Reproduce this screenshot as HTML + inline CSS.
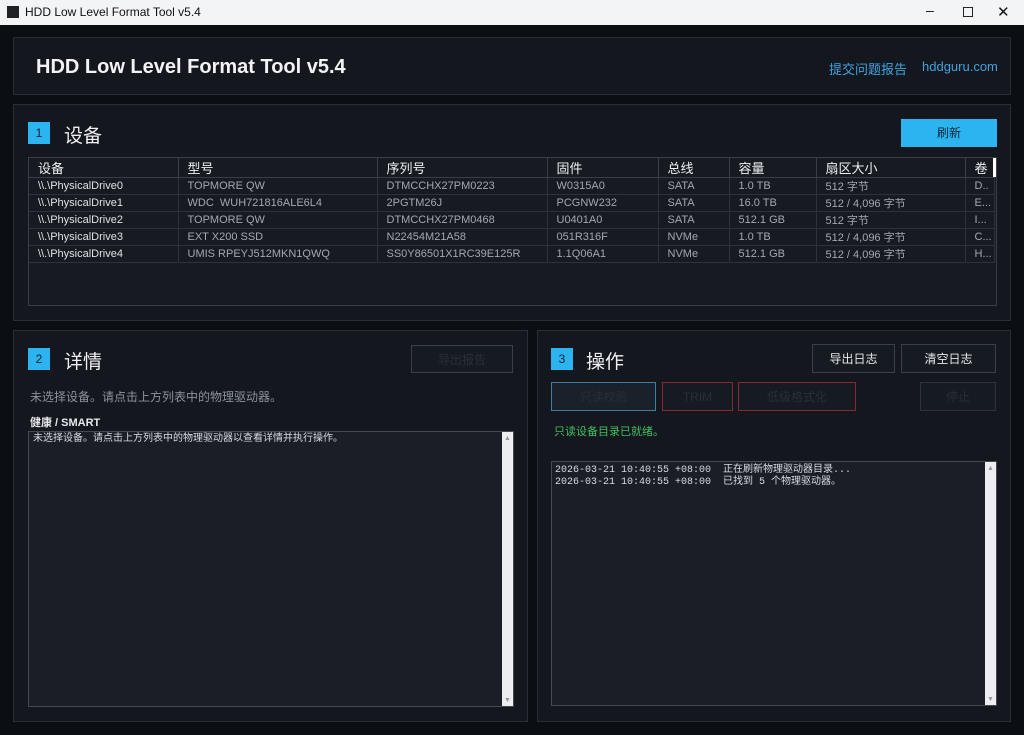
<!DOCTYPE html><html><head><meta charset="utf-8"><style>
*{box-sizing:border-box;margin:0;padding:0}
body{width:1024px;height:735px;overflow:hidden;background:#0b0e13;font-family:"Liberation Sans","Noto Sans CJK SC",sans-serif;color:#e8eaee;position:relative}
.a{position:absolute}
.tb{left:0;top:0;width:1024px;height:25px;background:#f3f4f6;color:#111;font-size:12px}
.pn{background:#14171e;border:1px solid #2a2e36}
.badge{width:22px;height:22px;background:#2bb4ef;color:#0d2030;font-size:12px;text-align:center;line-height:22px}
.h2{font-size:19px;color:#eef0f3}
.btn{border:1px solid #3a3f48;background:#161a21;font-size:12px;text-align:center;color:#e6e8ec}
.dis{color:#2a2f38}
table{border-collapse:collapse;font-size:11px;width:100%}
td{height:17px;border-bottom:1px solid #2e323a;border-right:1px solid #2e323a;padding-left:9px;color:#a3a8b0;white-space:nowrap}
th{height:19px;font-weight:normal;text-align:left;padding-left:9px;font-size:13px;color:#eef0f3;border-right:1px solid #3a3e46;border-bottom:1px solid #3a3e46}
td:first-child{color:#dfe2e6}
.ta{background:#1b1e27;border:1px solid #454a52}
.sb{background:#eceef1;width:11px}
.mono{font-family:"Liberation Mono","Noto Sans CJK SC",monospace;font-size:10px;color:#d8dbe0;line-height:12px}
</style></head><body>
<div class="a tb"><div class="a" style="left:7px;top:6px;width:12px;height:12px;background:#222"></div><div class="a" style="left:25px;top:5px">HDD Low Level Format Tool v5.4</div>
<div class="a" style="left:926px;top:2px;font-size:14px">–</div><div class="a" style="left:963px;top:7px;width:10px;height:10px;border:1px solid #222"></div><div class="a" style="left:997px;top:3px;font-size:15px">✕</div></div>
<div class="a pn" style="left:13px;top:37px;width:998px;height:58px"></div>
<div class="a" style="left:36px;top:56px;font-size:20px;font-weight:bold;color:#f2f3f5">HDD Low Level Format Tool v5.4</div>
<div class="a" style="left:829px;top:59px;font-size:13px;color:#3fa3e0">提交问题报告</div>
<div class="a" style="left:922px;top:59px;font-size:13px;color:#3fa3e0">hddguru.com</div>

<div class="a pn" style="left:13px;top:104px;width:998px;height:217px"></div>
<div class="a badge" style="left:28px;top:122px">1</div><div class="a h2" style="left:64px;top:121px">设备</div>
<div class="a" style="left:901px;top:119px;width:96px;height:28px;background:#2bb4ef;color:#0f2535;font-size:12px;text-align:center;line-height:28px">刷新</div>
<div class="a" style="left:28px;top:157px;width:969px;height:149px;border:1px solid #3a3e46;background:#171a21">
<table style="width:966px"><tr><th style="width:149px">设备</th><th style="width:199px">型号</th><th style="width:170px">序列号</th><th style="width:111px">固件</th><th style="width:71px">总线</th><th style="width:87px">容量</th><th style="width:149px">扇区大小</th><th>卷</th></tr>
<tr><td>\\.\PhysicalDrive0</td><td>TOPMORE QW</td><td>DTMCCHX27PM0223</td><td>W0315A0</td><td>SATA</td><td>1.0 TB</td><td>512 字节</td><td>D..</td></tr>
<tr><td>\\.\PhysicalDrive1</td><td>WDC &nbsp;WUH721816ALE6L4</td><td>2PGTM26J</td><td>PCGNW232</td><td>SATA</td><td>16.0 TB</td><td>512 / 4,096 字节</td><td>E...</td></tr>
<tr><td>\\.\PhysicalDrive2</td><td>TOPMORE QW</td><td>DTMCCHX27PM0468</td><td>U0401A0</td><td>SATA</td><td>512.1 GB</td><td>512 字节</td><td>I...</td></tr>
<tr><td>\\.\PhysicalDrive3</td><td>EXT X200 SSD</td><td>N22454M21A58</td><td>051R316F</td><td>NVMe</td><td>1.0 TB</td><td>512 / 4,096 字节</td><td>C...</td></tr>
<tr><td>\\.\PhysicalDrive4</td><td>UMIS RPEYJ512MKN1QWQ</td><td>SS0Y86501X1RC39E125R</td><td>1.1Q06A1</td><td>NVMe</td><td>512.1 GB</td><td>512 / 4,096 字节</td><td>H...</td></tr></table>
<div class="a" style="left:964px;top:0;width:3px;height:19px;background:#fff"></div></div>

<div class="a pn" style="left:13px;top:330px;width:515px;height:392px"></div>
<div class="a badge" style="left:28px;top:348px">2</div><div class="a h2" style="left:64px;top:347px">详情</div>
<div class="a btn dis" style="left:411px;top:345px;width:102px;height:28px;line-height:28px">导出报告</div>
<div class="a" style="left:30px;top:388px;font-size:12px;color:#8d939c">未选择设备。请点击上方列表中的物理驱动器。</div>
<div class="a" style="left:30px;top:414px;font-size:11px;color:#e8eaee;font-weight:bold">健康 / SMART</div>
<div class="a ta" style="left:28px;top:431px;width:486px;height:276px"><div class="a mono" style="left:4px;top:2px">未选择设备。请点击上方列表中的物理驱动器以查看详情并执行操作。</div>
<div class="a sb" style="right:0;top:0;height:274px"><div class="a" style="left:2px;top:3px;font-size:7px;color:#999">▲</div><div class="a" style="left:2px;bottom:2px;font-size:7px;color:#999">▼</div></div></div>

<div class="a pn" style="left:537px;top:330px;width:474px;height:392px"></div>
<div class="a badge" style="left:551px;top:348px">3</div><div class="a h2" style="left:586px;top:347px">操作</div>
<div class="a btn" style="left:812px;top:344px;width:83px;height:29px;line-height:29px">导出日志</div>
<div class="a btn" style="left:901px;top:344px;width:95px;height:29px;line-height:29px">清空日志</div>
<div class="a btn dis" style="left:551px;top:382px;width:105px;height:29px;line-height:29px;border-color:#3d7fa3;background:#19212b">只读校验</div>
<div class="a btn dis" style="left:662px;top:382px;width:71px;height:29px;line-height:29px;border-color:#8a2730">TRIM</div>
<div class="a btn dis" style="left:738px;top:382px;width:118px;height:29px;line-height:29px;border-color:#8a2730">低级格式化</div>
<div class="a btn dis" style="left:920px;top:382px;width:76px;height:29px;line-height:29px;border-color:#2e333b">停止</div>
<div class="a" style="left:554px;top:423px;font-size:11px;color:#3fbf5f">只读设备目录已就绪。</div>
<div class="a ta" style="left:551px;top:461px;width:446px;height:245px"><div class="a mono" style="left:3px;top:3px;white-space:pre">2026-03-21 10:40:55 +08:00  正在刷新物理驱动器目录...
2026-03-21 10:40:55 +08:00  已找到 5 个物理驱动器。</div>
<div class="a sb" style="right:0;top:0;height:243px"><div class="a" style="left:2px;top:3px;font-size:7px;color:#999">▲</div><div class="a" style="left:2px;bottom:2px;font-size:7px;color:#999">▼</div></div></div>
</body></html>
